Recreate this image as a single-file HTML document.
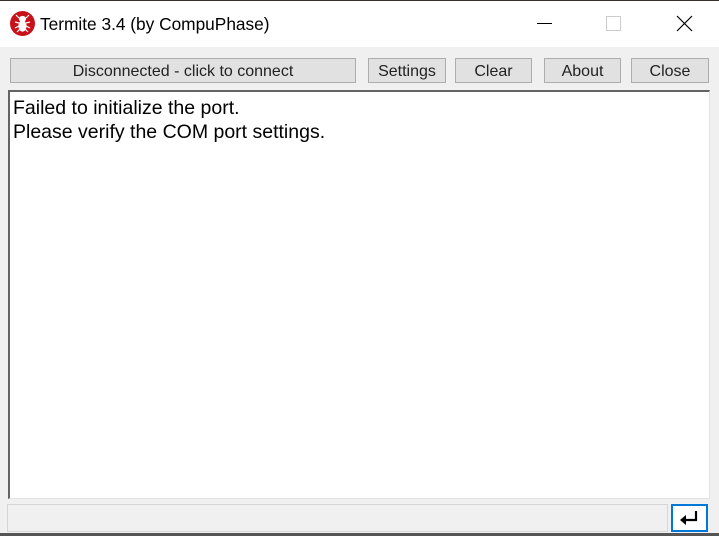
<!DOCTYPE html>
<html><head><style>
body{margin:0;width:719px;height:536px;overflow:hidden;background:#f0f0f0;font-family:"Liberation Sans",sans-serif;position:relative}
div{position:absolute;box-sizing:border-box}
.tb{left:0;top:0;width:719px;height:47px;background:#fff;border-top:1px solid #3a3226}
.btn{top:58px;height:25px;background:#e1e1e1;border:1px solid #adadad;font-size:16px;color:#222;text-align:center;line-height:25px}
</style></head><body>
<div class="tb"></div>
<div style="left:10px;top:11px;width:25px;height:25px;border-radius:50%;background:#c8121a"></div>
<svg style="position:absolute;left:10px;top:11px" width="25" height="25" viewBox="0 0 25 25"><g fill="#fff" stroke="#fff" stroke-width="1.2"><ellipse cx="12.5" cy="8" rx="3" ry="2.5"/><ellipse cx="12.5" cy="15" rx="3.5" ry="5"/><path d="M9 7l-3-3M16 7l3-3M9 12l-4-1M16 12l4-1M9 15l-4 2M16 15l4 2M10 18l-3 3M15 18l3 3" fill="none"/></g></svg>
<div style="left:40px;top:14px;font-size:17.3px;color:#000">Termite 3.4 (by CompuPhase)</div>
<div style="left:537px;top:23px;width:15px;height:1px;background:#000"></div>
<div style="left:606px;top:16px;width:15px;height:15px;border:1px solid #ccc"></div>
<svg style="position:absolute;left:676px;top:15px" width="17" height="17"><path d="M1 1L16 16M16 1L1 16" stroke="#000" stroke-width="1.2"/></svg>
<div class="btn" style="left:10px;width:346px">Disconnected - click to connect</div>
<div class="btn" style="left:368px;width:78px">Settings</div>
<div class="btn" style="left:455px;width:77px">Clear</div>
<div class="btn" style="left:544px;width:77px">About</div>
<div class="btn" style="left:631px;width:78px">Close</div>
<div style="left:8px;top:90px;width:702px;height:409px;background:#fff;border-top:2px solid #646464;border-left:2px solid #646464;border-right:1px solid #e3e3e3;border-bottom:1px solid #e3e3e3;padding:4px 0 0 3px;font-size:19.5px;line-height:24px;color:#000">Failed to initialize the port.<br>Please verify the COM port settings.</div>
<div style="left:7px;top:504px;width:661px;height:28px;border:1px solid #d6d6d6;background:#f0f0f0"></div>
<div style="left:671px;top:504px;width:37px;height:28px;background:#fff;border:2px solid #0078d7"></div>
<svg style="position:absolute;left:679px;top:509px" width="22" height="18"><path d="M17 2v9H5" stroke="#000" stroke-width="2.2" fill="none"/><path d="M1 11l6-5v10z" fill="#000"/></svg>
<div style="left:0;top:533px;width:719px;height:3px;background:#555"></div>
</body></html>
